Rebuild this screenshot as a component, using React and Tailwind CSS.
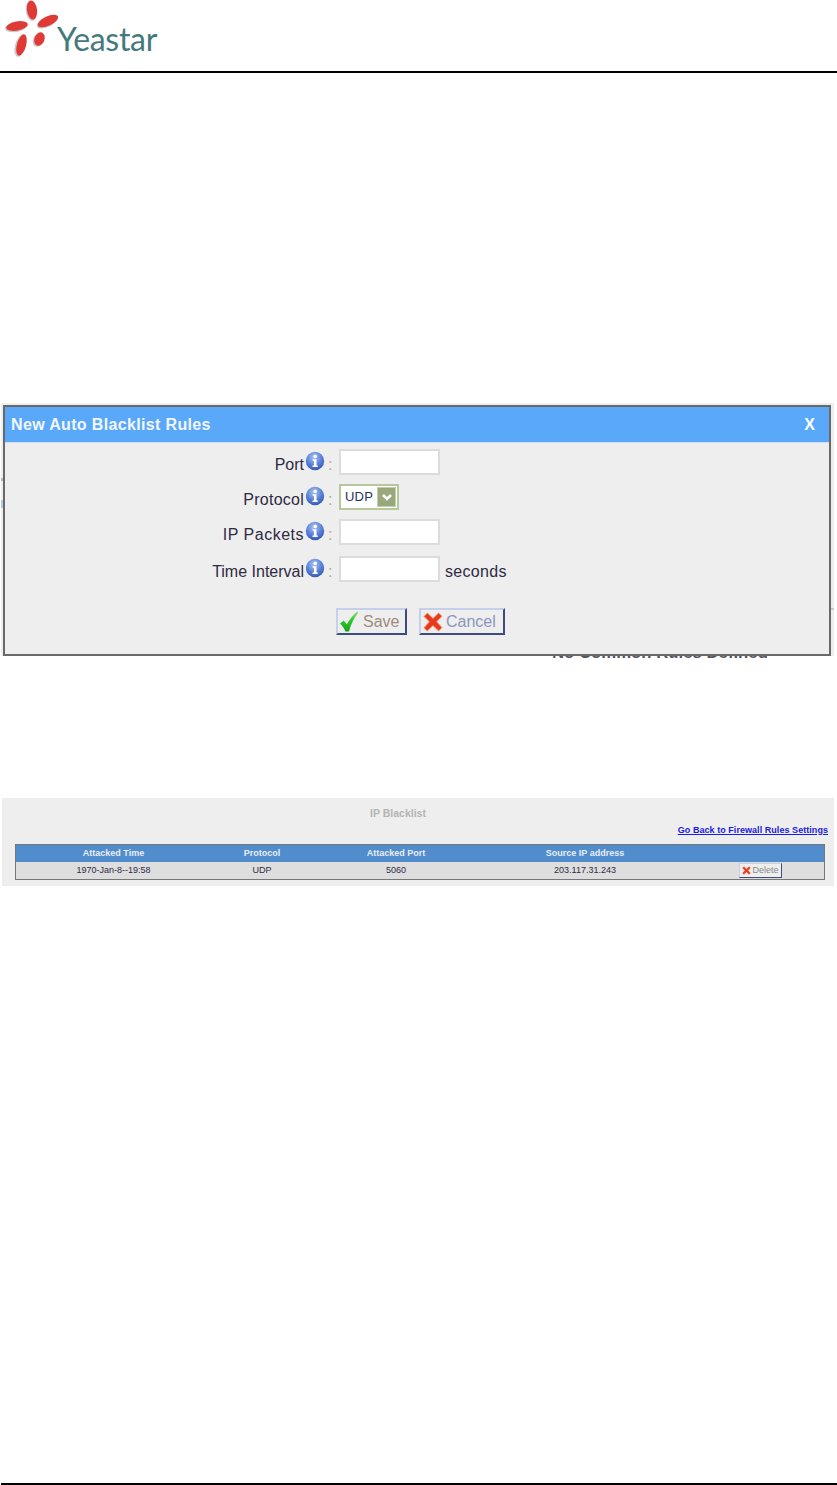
const sans = "font-['Liberation_Sans',Arial,sans-serif]";

const InfoIcon = () => (
  <svg viewBox="0 0 20 20" className="w-[20px] h-[20px] shrink-0">
    <defs>
      <radialGradient id="infoFill" cx="45%" cy="30%" r="75%">
        <stop offset="0%" stopColor="#a9c3f2" />
        <stop offset="55%" stopColor="#5b82d8" />
        <stop offset="100%" stopColor="#2f55ad" />
      </radialGradient>
    </defs>
    <circle cx="10" cy="10" r="9.2" fill="url(#infoFill)" />
    <circle cx="10.2" cy="5.4" r="1.8" fill="#fff" />
    <path d="M7.6 8.2h3.9v6.2h1.3v1.5H7.5v-1.5h1.4V9.7H7.6z" fill="#fff" />
  </svg>
);

const CheckIcon = () => (
  <svg viewBox="0 0 20 20" className="w-[21px] h-[21px] shrink-0 -ml-[1px]">
    <defs>
      <linearGradient id="checkFill" x1="0" y1="0" x2="0" y2="1">
        <stop offset="0%" stopColor="#8fe07a" />
        <stop offset="45%" stopColor="#2fc62f" />
        <stop offset="100%" stopColor="#12a612" />
      </linearGradient>
    </defs>
    <path d="M1 12 4.5 9 7.5 12.5C10 8 13 4 17.5 0.5L18.5 1.5C14.5 6.5 11.5 12 9.5 19.5L6 19.5C5 16.5 3 14 1 12Z" fill="url(#checkFill)" />
  </svg>
);

const CrossIcon = ({ className }) => (
  <svg viewBox="0 0 20 20" className={className}>
    <path d="M4.4 1 10 6.4 15.6 1 19 4.2 13.6 9.8 19 15.6 15.6 19 10 13.6 4.2 19 1 15.8 6.4 9.8 1 4.4Z" fill="#e8391e" stroke="#f39a6c" strokeWidth="0.8" />
  </svg>
);

const YeastarLogo = () => (
  <div className="flex items-start h-[60px]">
    <svg viewBox="0 0 58 60" className="w-[58px] h-[60px] shrink-0">
      <g fill="#9a9a9a" opacity="0.55">
        <ellipse cx="31" cy="11" rx="5" ry="10" transform="rotate(-8 31 11)" />
        <ellipse cx="47" cy="22" rx="11" ry="5" transform="rotate(-25 47 22)" />
        <ellipse cx="16" cy="27" rx="11" ry="5" transform="rotate(-10 16 27)" />
        <ellipse cx="20" cy="46" rx="5" ry="11" transform="rotate(15 20 46)" />
        <ellipse cx="38" cy="40" rx="5" ry="7" transform="rotate(20 38 40)" />
      </g>
      <g fill="#e03a36">
        <ellipse cx="32" cy="10" rx="5" ry="9.5" transform="rotate(-8 32 10)" />
        <ellipse cx="48" cy="21" rx="11" ry="4.6" transform="rotate(-25 48 21)" />
        <ellipse cx="17" cy="26" rx="11" ry="4.6" transform="rotate(-10 17 26)" />
        <ellipse cx="21.5" cy="45" rx="4.6" ry="11" transform="rotate(15 21.5 45)" />
        <ellipse cx="39.5" cy="39" rx="5" ry="7" transform="rotate(20 39.5 39)" />
      </g>
    </svg>
    <span className="font-['Lato',sans-serif] text-[32px] leading-none text-[#44797d] mt-[23px] -ml-[1px] tracking-[-0.3px]">
      Yeastar
    </span>
  </div>
);

const FormRow = ({ label, labelClass, className, children }) => (
  <div className={`flex items-start h-[26px] ${className}`}>
    <span className={`w-[299px] text-right text-[16px] leading-[18px] text-[#2e2a44] mt-[7px] ${labelClass}`}>{label}</span>
    <span className="mt-[2px] ml-[1px]"><InfoIcon /></span>
    <span className="w-[14px] pl-[3px] text-[16px] leading-[18px] text-[#b3ac7c] mt-[7px]">:</span>
    {children}
  </div>
);

const TextBox = () => <div className="w-[101px] h-[26px] bg-white border-2 border-[#dcdcdc]" />;

const DialogButton = ({ width, textColor, icon, label }) => (
  <div
    className={`${width} h-[27px] flex items-center gap-[3px] pl-[2px] bg-[#eeeeee] border-2 border-t-[#c6d0ea] border-l-[#c6d0ea] border-r-[#3f4b80] border-b-[#3f4b80] text-[16px] leading-none ${textColor}`}
  >
    {icon}
    <span>{label}</span>
  </div>
);

const AutoBlacklistDialog = () => (
  <div className="relative w-[833px] h-[253px] ml-[1px] pl-[2px] pr-[3px] pt-[2px] bg-[#eeeeee]">
    <div className="absolute right-0 top-[205px] w-[3px] h-[2px] bg-[#c8c8c8]" />
    <div className="absolute left-0 top-[75px] w-[2px] h-[3px] bg-[#c9b0b0]" />
    <div className="absolute left-0 top-[97px] w-[2px] h-[8px] bg-[#b9c6e6]" />
    <div className="h-full border-2 border-[#696969] bg-[#eeeeee]">
      <div className="flex items-center justify-between h-[36px] px-[6px] pr-[14px] bg-[#5aa8fa] border-b border-[#cfe0f2] text-[16px] font-bold text-[#f2f7ff]">
        <span className="tracking-[0.35px]">New Auto Blacklist Rules</span>
        <span className="text-white">X</span>
      </div>
      <div className="pt-[6px]">
        <FormRow label="Port"><TextBox /></FormRow>
        <FormRow label="Protocol" labelClass="tracking-[0.25px]" className="mt-[9px]">
          <div className="flex items-center justify-between w-[60px] h-[26px] pl-[4px] pr-[1px] bg-white border-2 border-[#b4c89c] text-[13px] tracking-[0.2px] text-[#28305c]">
            <span>UDP</span>
            <span className="flex items-center justify-center w-[19px] h-[20px] bg-[#98a87a] border border-[#c4cfae]">
              <svg viewBox="0 0 12 12" className="w-[12px] h-[12px]">
                <path d="M2 4 6 8 10 4" fill="none" stroke="#fff" strokeWidth="2.6" />
              </svg>
            </span>
          </div>
        </FormRow>
        <FormRow label="IP Packets" labelClass="tracking-[0.5px]" className="mt-[9px]"><TextBox /></FormRow>
        <FormRow label="Time Interval" className="mt-[11px]">
          <TextBox />
          <span className="ml-[5px] mt-[7px] text-[16px] leading-[18px] tracking-[0.3px] text-[#2e2a44]">seconds</span>
        </FormRow>
        <div className="flex gap-[12px] mt-[26px] ml-[331px]">
          <DialogButton width="w-[71px]" textColor="text-[#a08a7e]" icon={<CheckIcon />} label="Save" />
          <DialogButton
            width="w-[86px]"
            textColor="text-[#8b96bc]"
            icon={<CrossIcon className="w-[20px] h-[20px] shrink-0" />}
            label="Cancel"
          />
        </div>
      </div>
    </div>
  </div>
);

const columns = "grid grid-cols-[195px_102px_166px_212px_133px] items-center text-center";

const IpBlacklistPanel = () => (
  <div className="w-[832px] h-[88px] ml-[2px] bg-[#eeeeee] text-[9px]">
    <div className="pt-[9px] pr-[40px] text-center text-[10.5px] leading-[12px] font-bold text-[#b4b4b4]">IP Blacklist</div>
    <div className="mt-[6px] pr-[6px] text-right leading-[11px] font-bold tracking-[0.05px] text-[#1a1ae0] underline">
      Go Back to Firewall Rules Settings
    </div>
    <div className="ml-[13px] mt-[8px] w-[810px] border border-[#777777]">
      <div className={`${columns} h-[17px] bg-[#518ccc] font-bold text-[#e9eef6]`}>
        <span>Attacked Time</span>
        <span>Protocol</span>
        <span>Attacked Port</span>
        <span>Source IP address</span>
        <span />
      </div>
      <div className={`${columns} h-[17px] bg-[#dedede] text-[#2e2a44]`}>
        <span>1970-Jan-8--19:58</span>
        <span>UDP</span>
        <span>5060</span>
        <span>203.117.31.243</span>
        <span className="flex justify-center pl-[5px]">
          <span className="flex items-center gap-[2px] w-[43px] h-[15px] pl-[2px] bg-[#eeeeee] border border-t-[#c6d0ea] border-l-[#c6d0ea] border-r-[#3f4b80] border-b-[#3f4b80] text-[#8a8a8a]">
            <CrossIcon className="w-[9px] h-[9px] shrink-0" />
            Delete
          </span>
        </span>
      </div>
    </div>
  </div>
);

export default function App() {
  return (
    <div className={`${sans} flex flex-col w-[837px] min-h-[1485px] bg-white`}>
      <header className="h-[73px] border-b-2 border-black">
        <YeastarLogo />
      </header>
      <div className="mt-[330px]">
        <AutoBlacklistDialog />
      </div>
      {/* heading of the page behind the dialog, only its lower edge shows */}
      <div className="h-[2px] overflow-hidden pl-[552px]">
        <div className="-mt-[12px] text-[16.75px] leading-[18px] font-bold text-[#55555f] whitespace-nowrap">
          No Common Rules Defined
        </div>
      </div>
      <div className="mt-[140px]">
        <IpBlacklistPanel />
      </div>
      <footer className="mt-auto ml-[1px] h-[2px] bg-black" />
    </div>
  );
}
